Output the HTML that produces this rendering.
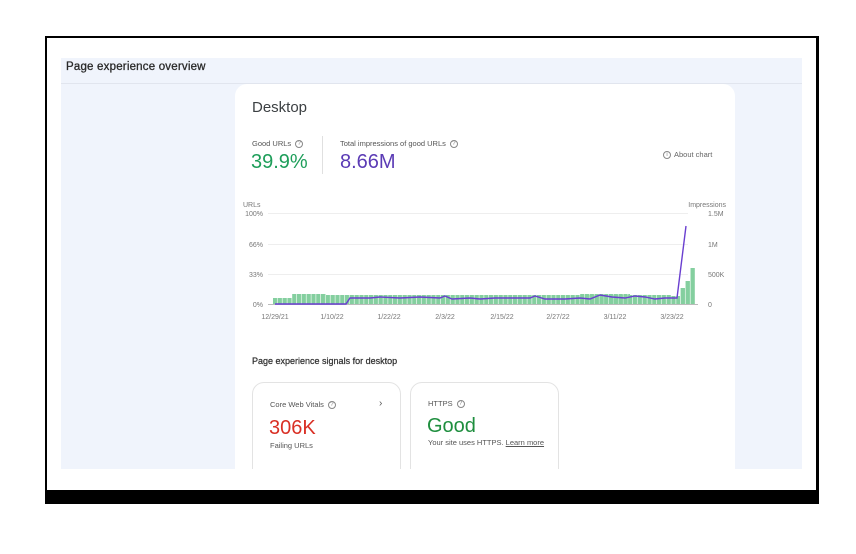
<!DOCTYPE html>
<html><head><style>
*{margin:0;padding:0;box-sizing:border-box}
body{width:856px;height:554px;background:#fff;position:relative;overflow:hidden;font-family:"Liberation Sans",Arial,sans-serif;color:#3c4043}
.a{position:absolute;white-space:nowrap}
.q{display:inline-block;width:8px;height:8px;border:1px solid #888;border-radius:50%;font-size:6px;line-height:6px;text-align:center;color:#888;vertical-align:middle;margin-left:4px}
</style></head><body>
<div class="a" style="left:45px;top:36px;width:774px;height:468px;border:2px solid #000;border-right-width:3px;background:#fff"></div>
<div class="a" style="left:45px;top:490px;width:774px;height:14px;background:#000"></div>
<div class="a" style="left:61px;top:58px;width:741px;height:411px;background:#f0f4fc"></div>
<div class="a" style="left:61px;top:83px;width:741px;height:1px;background:#e1e5ee"></div>
<div class="a" style="left:66px;top:59px;font-size:11.5px;line-height:16px;color:#2a2a2a;letter-spacing:.2px;-webkit-text-stroke:.3px #2a2a2a">Page experience overview</div>
<div class="a" style="left:235px;top:84px;width:500px;height:385px;background:#fff;border-radius:12px 12px 0 0"></div>
<div class="a" style="left:252px;top:99px;font-size:15px;line-height:18px;color:#3c4043">Desktop</div>
<div class="a" style="left:252px;top:139px;font-size:7.5px;color:#555">Good URLs<span class="q">?</span></div>
<div class="a" style="left:251px;top:150px;font-size:20px;line-height:24px;color:#1e9e5a">39.9%</div>
<div class="a" style="left:322px;top:136px;width:1px;height:38px;background:#e0e0e0"></div>
<div class="a" style="left:340px;top:139px;font-size:7.5px;color:#555">Total impressions of good URLs<span class="q">?</span></div>
<div class="a" style="left:340px;top:150px;font-size:20px;line-height:24px;color:#5b3bb5">8.66M</div>
<div class="a" style="left:663px;top:150px;font-size:7.5px;color:#666"><span class="q" style="margin:0 3px 0 0">i</span>About chart</div>
<svg class="a" style="left:0;top:0" width="856" height="554" font-family="Liberation Sans,Arial,sans-serif" font-size="7" fill="#777">
<defs><pattern id="b" x="273" y="0" width="4.8" height="400" patternUnits="userSpaceOnUse"><rect width="4.2" height="400" fill="#84cf9f"/></pattern></defs>
<g stroke="#eee" stroke-width="1"><line x1="268" y1="213.5" x2="688" y2="213.5"/><line x1="268" y1="244.5" x2="688" y2="244.5"/><line x1="268" y1="274.5" x2="688" y2="274.5"/></g>
<rect x="273" y="298" width="19" height="6" fill="url(#b)"/>
<rect x="292" y="294" width="34" height="10" fill="url(#b)"/>
<rect x="326" y="295" width="345" height="9" fill="url(#b)"/>
<rect x="580" y="294" width="50" height="10" fill="url(#b)"/>
<rect x="671" y="296" width="9" height="8" fill="url(#b)"/>
<rect x="680" y="288" width="5" height="16" fill="url(#b)"/>
<rect x="685" y="281" width="5" height="23" fill="url(#b)"/>
<rect x="690" y="268" width="5" height="36" fill="url(#b)"/>
<line x1="268" y1="304.5" x2="698" y2="304.5" stroke="#bbb"/>
<polyline fill="none" stroke="#6a3fd0" stroke-width="1.4" points="275,304 346,304 350,298 370,298 380,297 400,298 420,297 440,298 445,296 452,299 470,298 480,299 495,298 510,298 530,298 535,296 545,299 565,299 580,298 590,299 600,295 612,297 625,298 635,296 645,297 655,299 665,298 677,298 686,226"/>
<text x="243" y="207">URLs</text>
<g text-anchor="end"><text x="263" y="216">100%</text><text x="263" y="247">66%</text><text x="263" y="277">33%</text><text x="263" y="307">0%</text><text x="726" y="207">Impressions</text></g>
<text x="708" y="216">1.5M</text><text x="708" y="247">1M</text><text x="708" y="277">500K</text><text x="708" y="307">0</text>
<g text-anchor="middle"><text x="275" y="319">12/29/21</text><text x="332" y="319">1/10/22</text><text x="389" y="319">1/22/22</text><text x="445" y="319">2/3/22</text><text x="502" y="319">2/15/22</text><text x="558" y="319">2/27/22</text><text x="615" y="319">3/11/22</text><text x="672" y="319">3/23/22</text></g>
</svg>
<div class="a" style="left:252px;top:356px;font-size:9px;color:#333;-webkit-text-stroke:.25px #333">Page experience signals for desktop</div>
<div class="a" style="left:252px;top:382px;width:149px;height:100px;border:1px solid #e3e3e3;border-radius:12px"></div>
<div class="a" style="left:410px;top:382px;width:149px;height:100px;border:1px solid #e3e3e3;border-radius:12px"></div>
<div class="a" style="left:61px;top:469px;width:741px;height:21px;background:#fff"></div>
<div class="a" style="left:270px;top:400px;font-size:7.5px;color:#555">Core Web Vitals<span class="q">?</span></div>
<div class="a" style="left:379px;top:398px;font-size:10px;color:#555">›</div>
<div class="a" style="left:269px;top:416px;font-size:20px;line-height:24px;color:#d93025">306K</div>
<div class="a" style="left:270px;top:441px;font-size:7.5px;color:#555">Failing URLs</div>
<div class="a" style="left:428px;top:399px;font-size:7.5px;color:#555">HTTPS<span class="q">?</span></div>
<div class="a" style="left:427px;top:414px;font-size:20px;line-height:24px;color:#1e8e3e">Good</div>
<div class="a" style="left:428px;top:438px;font-size:7.5px;color:#555">Your site uses HTTPS. <u>Learn more</u></div>
</body></html>
